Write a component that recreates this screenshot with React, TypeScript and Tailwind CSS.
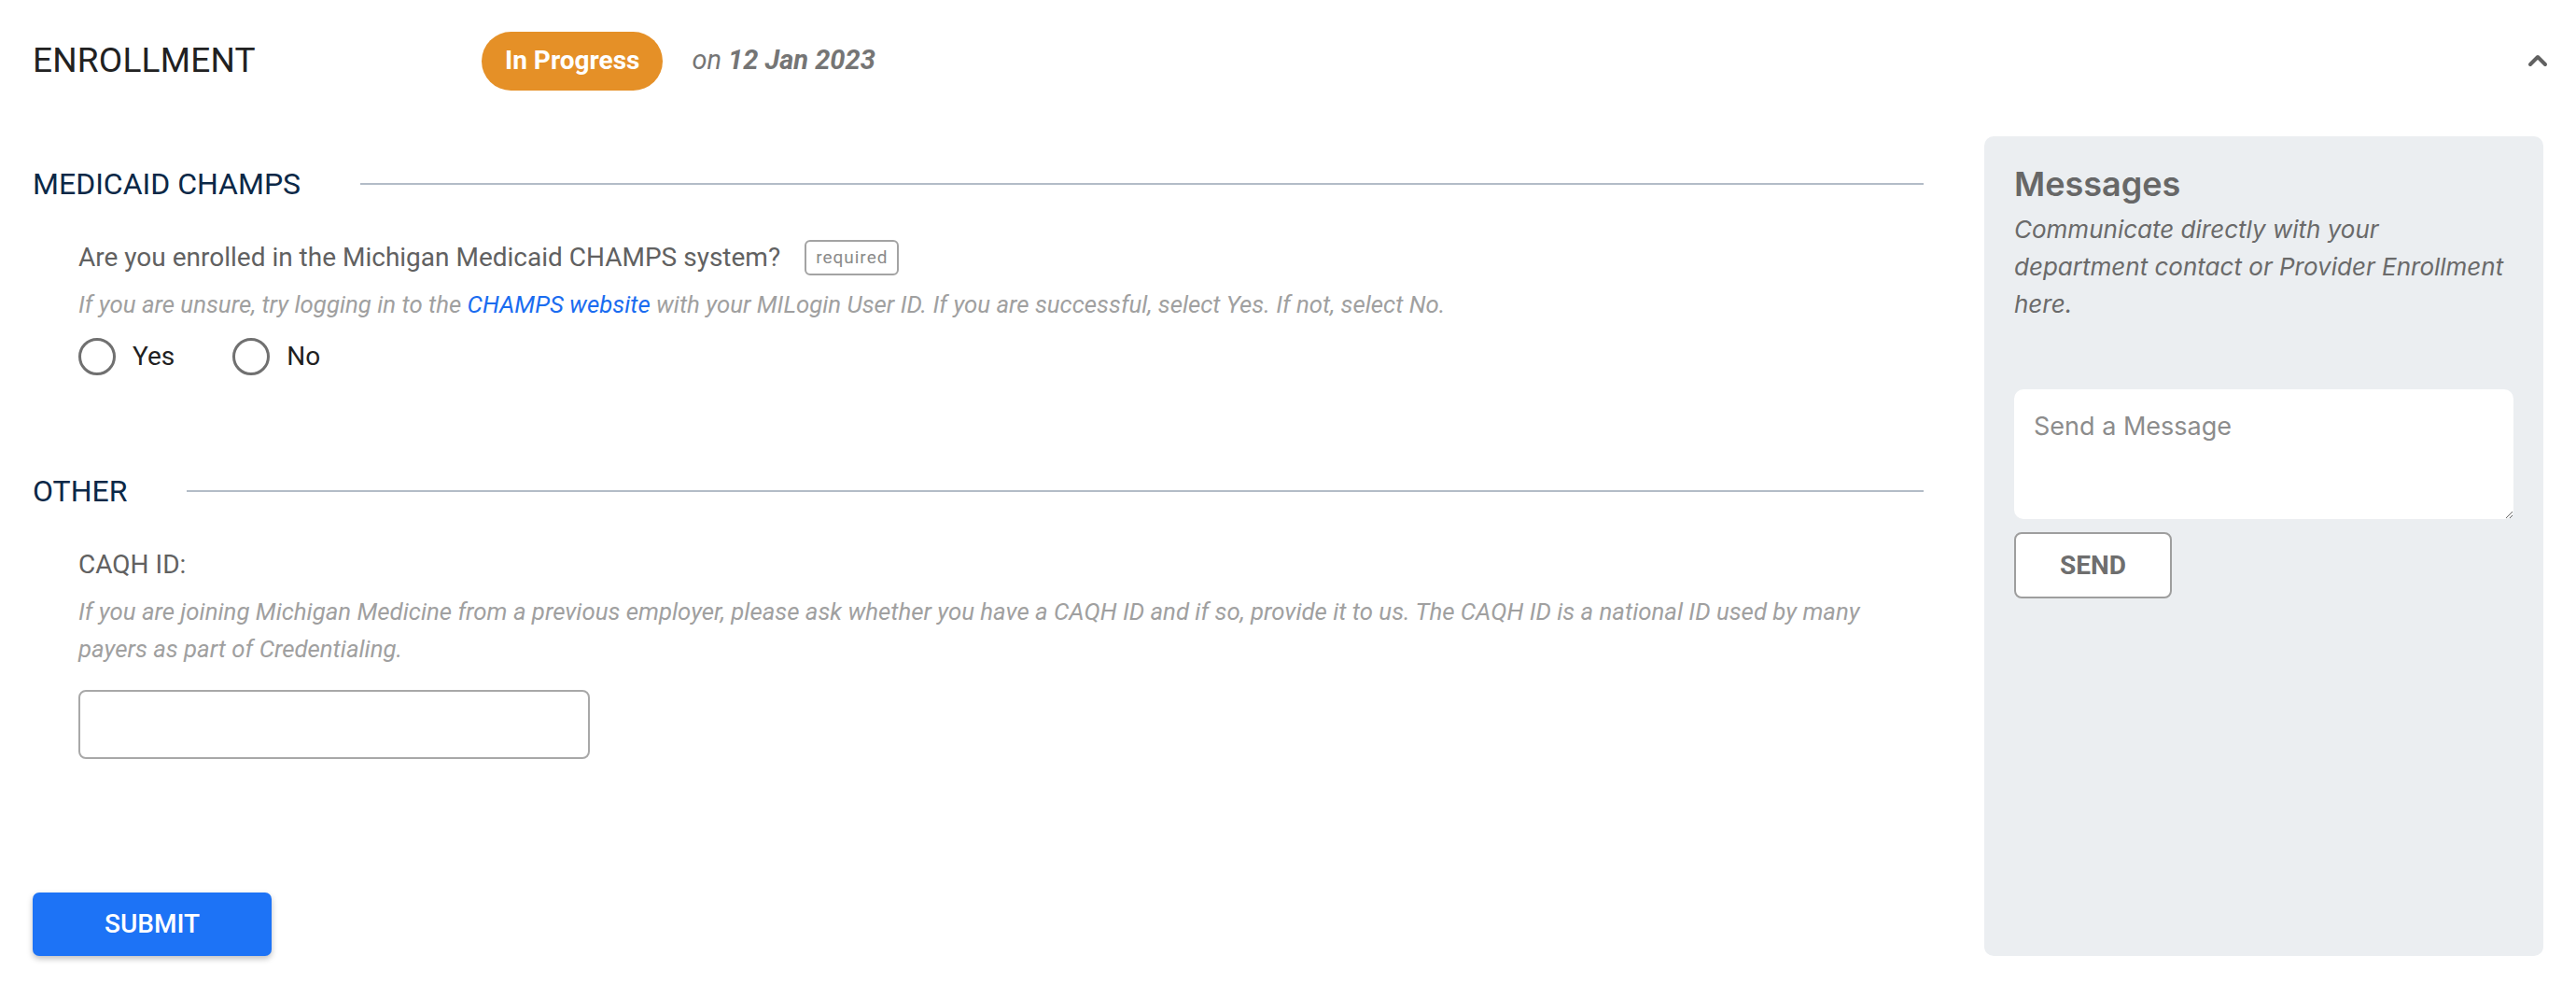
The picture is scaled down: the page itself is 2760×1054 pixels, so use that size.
import React from 'react';
import { ChevronUp } from 'lucide-react';

const SectionHeader = ({ title }: { title: string }) => (
  <div className="flex items-center gap-[64px] h-[36px]">
    <h2 className="text-[32px] leading-[36px] text-[#0b2847] uppercase">{title}</h2>
    <div className="flex-1 h-[2px] bg-[#b3bcc7]"></div>
  </div>
);

const Radio = ({ label }: { label: string }) => (
  <label className="flex items-center gap-[18px] cursor-pointer">
    <span className="w-[40px] h-[40px] rounded-full border-[3.5px] border-[#707070] bg-white"></span>
    <span className="text-[28px] text-[#212121]">{label}</span>
  </label>
);

const App = () => {
  return (
    <div className="w-full min-h-screen bg-white font-['Roboto',sans-serif]">
      {/* Header */}
      <div className="flex items-center h-[130px] px-[35px]">
        <div className="w-[481px] text-[37px] text-[#212121] tracking-[0.2px]">ENROLLMENT</div>
        <span className="flex items-center h-[63px] px-[25px] rounded-full bg-[#e59027] text-white text-[28px] font-bold">
          In Progress
        </span>
        <span className="ml-[31px] text-[29px] italic text-[#757575]">
          on <span className="font-bold">12 Jan 2023</span>
        </span>
        <ChevronUp className="ml-auto mr-[-10px] text-[#616161]" size={32} strokeWidth={3} />
      </div>

      {/* Body */}
      <div className="flex items-stretch gap-[65px] px-[35px] pt-[16px] pb-[30px]">
        <div className="flex-1 flex flex-col">
          <div className="mt-[33px]">
            <SectionHeader title="Medicaid CHAMPS" />
          </div>
          <div className="pl-[49px]">
            <div className="flex items-center gap-[26px] h-[38px] mt-[42px]">
              <span className="text-[28px] text-[#616161]">Are you enrolled in the Michigan Medicaid CHAMPS system?</span>
              <span className="flex items-center h-[38px] px-[10px] rounded-[6px] border-2 border-[#a3a3a3] text-[19px] tracking-[1px] text-[#8a8a8a]">
                required
              </span>
            </div>
            <p className="mt-[15px] text-[25.8px] leading-[32px] italic text-[#a0a0a0]">
              If you are unsure, try logging in to the <a className="text-[#1a6cf0]">CHAMPS website</a> with your MILogin User ID. If you are successful, select Yes. If not, select No.
            </p>
            <div className="flex items-center gap-[62px] h-[40px] mt-[20px]">
              <Radio label="Yes" />
              <Radio label="No" />
            </div>
          </div>

          <div className="mt-[106px]">
            <SectionHeader title="Other" />
          </div>
          <div className="pl-[49px]">
            <div className="mt-[43px] text-[28px] leading-[36px] text-[#616161]">CAQH ID:</div>
            <p className="mt-[12px] text-[25.8px] leading-[40px] italic text-[#a0a0a0]">
              If you are joining Michigan Medicine from a previous employer, please ask whether you have a CAQH ID and if so, provide it to us. The CAQH ID is a national ID used by many payers as part of Credentialing.
            </p>
            <input
              type="text"
              className="mt-[24px] w-[548px] h-[74px] rounded-[8px] border-2 border-[#a8a8a8] bg-white px-[16px] text-[28px] outline-none"
            />
          </div>

          <button className="mt-[143px] w-[256px] h-[68px] rounded-[7px] bg-[#1d73f6] text-white text-[28px] font-medium shadow-[0_3px_6px_rgba(0,0,0,0.25)]">
            SUBMIT
          </button>
        </div>

        {/* Messages panel */}
        <div className="w-[599px] rounded-[10px] bg-[#ebeef1] px-[32px] pt-[29px] font-['Inter',sans-serif]">
          <h3 className="text-[36px] leading-[44px] font-semibold text-[#676767]">Messages</h3>
          <p className="mt-[7px] text-[26px] leading-[40px] italic text-[#6a6a6a]">
            Communicate directly with your department contact or Provider Enrollment here.
          </p>
          <textarea
            placeholder="Send a Message"
            className="mt-[71px] block w-full h-[139px] rounded-[10px] bg-white px-[21px] pt-[20px] pb-[10px] text-[27px] text-[#333] placeholder:text-[#8c8c8c] outline-none"
          ></textarea>
          <button className="mt-[14px] w-[169px] h-[71px] rounded-[8px] border-2 border-[#9e9e9e] bg-white text-[28px] font-bold text-[#6e6e6e] font-['Roboto',sans-serif]">
            SEND
          </button>
        </div>
      </div>
    </div>
  );
};

export default App;
